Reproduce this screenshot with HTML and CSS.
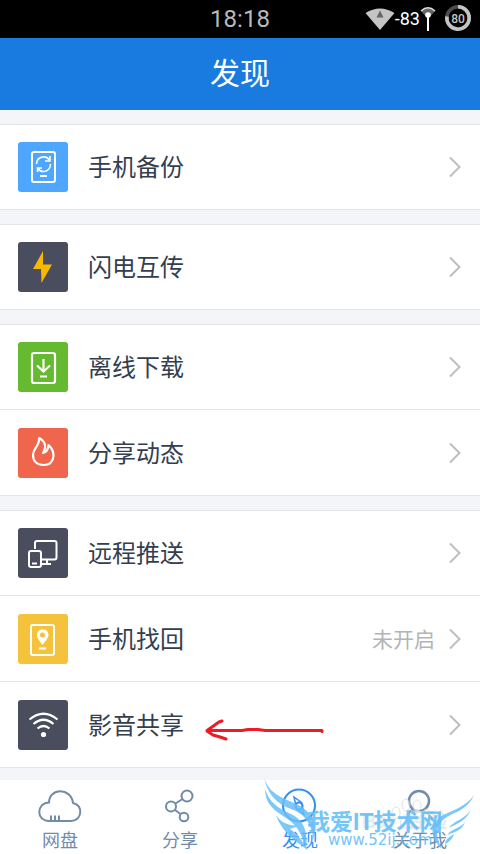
FILE: index.html
```html
<!DOCTYPE html>
<html lang="zh-CN">
<head>
<meta charset="utf-8">
<meta name="viewport" content="width=device-width, initial-scale=1">
<title>发现</title>
<link rel="stylesheet" href="styles.css">
</head>
<body>
<div class="status">
  <time class="clock">18:18</time>
  <div class="signals">
    <svg class="wifi" width="30" height="24" viewBox="0 0 30 24"><path d="M0.5 6Q15-3 29.500 6L15 23Z" fill="#c4c4c4"/><path d="M15 3.500L18.500 10.500H11.500Z" fill="#666"/></svg>
    <span class="dbm">-83</span>
    <svg class="antenna" width="16" height="26" viewBox="0 0 16 26"><path d="M1 5Q8-1 15 5L8 13Z" fill="#666"/><path d="M1 5Q8-1.500 15 5" fill="none" stroke="#ddd" stroke-width="1.500"/><circle cx="8" cy="9" r="2.800" fill="#fff"/><path d="M8 9V25" stroke="#fff" stroke-width="2"/></svg>
    <svg class="battery" width="28" height="28" viewBox="0 0 28 28"><circle cx="14" cy="13" r="11.200" fill="none" stroke="#4d4d4d" stroke-width="3.600"/><path d="M14 1.800A11.200 11.200 0 1 1 2.900 11.500" fill="none" stroke="#c4c4c4" stroke-width="3.600"/><text x="14" y="17.500" text-anchor="middle" class="level">80</text></svg>
  </div>
</div>
<header class="title"><h1>发现</h1></header>
<main>
  <ul class="group">
    <li><a href="#backup"><svg class="icon sky" viewBox="0 0 50 50"><g fill="none" stroke="#fff" stroke-width="2"><rect x="14" y="10" width="23" height="30" rx="2"/><path d="M18.500 22C19 14 28 13 31.500 18M32 14V19H27M32.500 22C32 31 23 31 20 26.500M19.500 30V26H24" stroke-width="1.600"/><path d="M22 34H29"/></g></svg><span class="name">手机备份</span><svg class="chevron" viewBox="0 0 12 22"><path d="M1 1.500L10.500 11L1 20.500"/></svg></a></li>
  </ul>
  <ul class="group">
    <li><a href="#flash"><svg class="icon slate" viewBox="0 0 50 50"><path d="M25 9L15 27H23L23.500 41L34 22.500H25Z" fill="#f6b900"/></svg><span class="name">闪电互传</span><svg class="chevron" viewBox="0 0 12 22"><path d="M1 1.500L10.500 11L1 20.500"/></svg></a></li>
  </ul>
  <ul class="group">
    <li><a href="#offline"><svg class="icon green" viewBox="0 0 50 50"><g fill="none" stroke="#fff" stroke-width="2.200"><rect x="14" y="11" width="23" height="30" rx="2"/><path d="M25.500 17V29M19 23.500L25.500 29.500L32 23.500M22 34.500H29"/></g></svg><span class="name">离线下载</span><svg class="chevron" viewBox="0 0 12 22"><path d="M1 1.500L10.500 11L1 20.500"/></svg></a></li>
    <li><a href="#feed"><svg class="icon coral" viewBox="0 0 50 50"><path d="M21 10C27 13 29 18 25 25C28 24 30.500 21 30.500 17C34 20 35.500 24 35.500 28C35 34 31 37 25.500 37C19 37 15 33 15 27C15 20 22 18 21 10Z" fill="none" stroke="#fff" stroke-width="2.200" stroke-linejoin="round"/></svg><span class="name">分享动态</span><svg class="chevron" viewBox="0 0 12 22"><path d="M1 1.500L10.500 11L1 20.500"/></svg></a></li>
  </ul>
  <ul class="group">
    <li><a href="#push"><svg class="icon slate" viewBox="0 0 50 50"><g fill="none" stroke="#fff" stroke-width="2"><path d="M17 21V15Q17 13 19 13H36.500Q38.500 13 38.500 15V29.500Q38.500 31.500 36.500 31.500H24"/><rect x="11" y="23" width="12" height="16" rx="2"/><path d="M14 35.500H19M24 36H33M29 32V36"/></g></svg><span class="name">远程推送</span><svg class="chevron" viewBox="0 0 12 22"><path d="M1 1.500L10.500 11L1 20.500"/></svg></a></li>
    <li><a href="#find"><svg class="icon yellow" viewBox="0 0 50 50"><rect x="13" y="11" width="23" height="30" rx="2" fill="none" stroke="#fff" stroke-width="2"/><path d="M24.500 31C21 26 19 24 19 20.500A5.800 5.800 0 0 1 30.500 20.500C30.500 24 28 26 24.500 31ZM24.500 18.500A2.500 2.500 0 1 0 24.500 23.500A2.500 2.500 0 1 0 24.500 18.500Z" fill="#fff" fill-rule="evenodd"/><path d="M21 34.500H28" stroke="#fff" stroke-width="2"/></svg><span class="name">手机找回</span><span class="state">未开启</span><svg class="chevron" viewBox="0 0 12 22"><path d="M1 1.500L10.500 11L1 20.500"/></svg></a></li>
    <li><a href="#media"><svg class="icon slate" viewBox="0 0 50 50"><g fill="none" stroke="#fff" stroke-width="2.200"><path d="M11.500 19.500Q25.500 8 39.500 19.500M15.500 24Q25.500 15.500 35.500 24M19.500 28.500Q25.500 23.500 31.500 28.500"/></g><circle cx="25.500" cy="34.500" r="2.600" fill="#fff"/></svg><span class="name">影音共享</span><svg class="chevron" viewBox="0 0 12 22"><path d="M1 1.500L10.500 11L1 20.500"/></svg></a>
      <svg class="arrow" width="122" height="26" viewBox="0 0 122 26"><path d="M118 13.500L118 12.500H61L54 11.500H44L38 12.500H3L8 9L15 4L18 3M3 13L9 17L16 19L22 21"/></svg></li>
  </ul>
</main>
<nav class="tabs">
  <a href="#disk"><svg width="46" height="36" viewBox="0 0 46 36"><path d="M12 33C-1 33-1 15 12 14.500C12 0 34-1 36 15C47 17 45 33 34 33ZM14 33V27.500M18 33V27.500M22 33V27.500"/></svg>网盘</a>
  <a href="#share"><svg width="46" height="36" viewBox="0 0 46 36"><circle cx="30" cy="8" r="5.500"/><circle cx="14" cy="18.500" r="5"/><circle cx="27" cy="29" r="4.300"/><path d="M18.500 15.500L25.500 11M18 22L23.500 26"/></svg>分享</a>
  <a href="#discover" class="active"><svg width="46" height="36" viewBox="0 0 46 36"><circle cx="22" cy="17.500" r="16"/><circle cx="22" cy="18" r="3.500"/><path d="M17 9L24.500 14.500L27 26.500L19.500 20.500Z" stroke-width="1.500"/></svg>发现</a>
  <a href="#me"><svg width="46" height="36" viewBox="0 0 46 36"><circle cx="22" cy="13" r="10" stroke-width="2.500"/><path d="M16 21C12 24 10 28 9 33M22 23C30 23 34 28 35 32"/></svg>关于我</a>
  <div class="mark">
    <svg class="paw" width="48" height="34" viewBox="0 0 48 34"><g fill="#fff" stroke="#ccc"><ellipse cx="8" cy="17" rx="4" ry="6"/><ellipse cx="18" cy="9" rx="4" ry="6"/><ellipse cx="29" cy="10" rx="4" ry="6"/><ellipse cx="38" cy="19" rx="4" ry="6"/><path d="M22 17C13 18 10 29 14 32H33C37 28 29 18 22 17Z"/></g></svg>
    <span class="ghost">Bai<i></i>经验</span>
    <svg class="wings" width="214" height="78" viewBox="0 0 214 78"><path d="M2 0C8 17 20 19 34 26C50 33 55 45 52 62C49 44 41 35 29 31C15 26 6 17 2 0ZM3 11C7 24 16 30 27 35C40 41 47 51 44 72C40 53 32 44 21 38C10 31 3 24 3 11ZM14 37C20 46 27 47 37 48L28 51C36 56 40 63 46 72C36 65 20 55 14 37ZM212 17C204 35 188 34 180 43C173 51 174 60 180 71C168 60 168 48 177 40C187 32 201 32 212 17ZM209 31C205 43 194 46 187 50C192 42 203 42 209 31ZM203 44C200 53 192 54 185 57C190 50 198 51 203 44ZM192 56C191 61 186 65 183 66C184 60 188 59 192 56Z"/></svg>
    <span class="brand">我爱IT技术网</span><span class="site">www.52ij.com</span>
  </div>
</nav>
</body>
</html>
```
FILE: styles.css
```css
* { box-sizing: border-box; }
body { margin: 0; min-height: 100vh; display: flex; flex-direction: column; background: #f3f5f8; color: #333e50; font-family: "Liberation Sans", "Noto Sans CJK SC", sans-serif; }
a { color: inherit; text-decoration: none; }
.status { height: 38px; flex: none; display: grid; grid-template-columns: 1fr auto 1fr; align-items: center; background: #000; }
.clock { grid-column: 2; color: #bababa; font: 24px/38px Roboto, sans-serif; }
.signals { display: flex; align-items: center; justify-content: flex-end; }
.dbm { color: #fff; font: 18px/38px Roboto, sans-serif; }
.battery { margin: 0 8px; }
.level { fill: #c4c4c4; font: 500 12px Roboto, sans-serif; }
.title { height: 72px; flex: none; background: #197ae0; color: #fff; text-align: center; }
h1 { margin: 0; font-size: 30px; line-height: 72px; font-weight: 400; }
main { flex: 1; padding-top: 14px; }
.group { list-style: none; margin: 0 0 14px; padding: 0; background: #fff; border: solid #e2e4e7; border-width: 1px 0; }
.group:last-child { margin-bottom: 12px; }
li { position: relative; padding: 17px 18px; }
li + li { padding-top: 18px; border-top: 1px solid #e2e4e7; }
li a { display: flex; align-items: center; }
.icon { width: 50px; height: 50px; border-radius: 3px; flex: none; }
.sky { background: #4ea6ff; }
.slate { background: #4a4d5e; }
.green { background: #65ba30; }
.coral { background: #ef664d; }
.yellow { background: #f5c33b; }
.name { flex: 1; margin-left: 20px; padding-top: 2px; font-size: 24px; line-height: 48px; }
.state { margin-right: 14px; padding-top: 2px; color: #b4b4b4; font-size: 21px; line-height: 48px; }
.chevron { width: 12px; height: 22px; margin-right: 1px; fill: none; stroke: #bebebe; stroke-width: 2; }
.arrow { position: absolute; left: 204px; top: 36px; fill: none; stroke: #ed1c24; stroke-width: 3; stroke-linecap: round; stroke-linejoin: round; }
.tabs { position: relative; flex: none; height: 74px; padding-top: 8px; display: grid; grid-template-columns: repeat(4, 1fr); background: #fff; color: #718baa; }
.tabs a { display: flex; flex-direction: column; align-items: center; gap: 2px; font-size: 18px; line-height: 30px; }
.tabs a svg { flex: none; fill: none; stroke: currentColor; stroke-width: 2; }
.tabs .active { color: #3291ee; }
.mark { position: absolute; right: 4px; bottom: 0; width: 214px; height: 76px; pointer-events: none; color: #65bff9; }
.wings { position: absolute; left: 0; top: 0; fill: #65bff9; opacity: .85; }
.paw { position: absolute; left: 126px; top: 18px; opacity: .6; }
.ghost { position: absolute; left: 100px; top: 30px; color: #e4e4e4; white-space: nowrap; font: bold 20px/26px "Liberation Sans", "Noto Sans CJK SC", sans-serif; opacity: .8; }
.ghost i { display: inline-block; width: 14px; }
.brand { position: absolute; left: 45px; top: 29px; white-space: nowrap; font: bold 23px/30px "Liberation Sans", "Noto Sans CJK SC", sans-serif; opacity: .9; }
.site { position: absolute; left: 66px; top: 54px; font: 15px/16px "DejaVu Sans", sans-serif; opacity: .9; }
```
